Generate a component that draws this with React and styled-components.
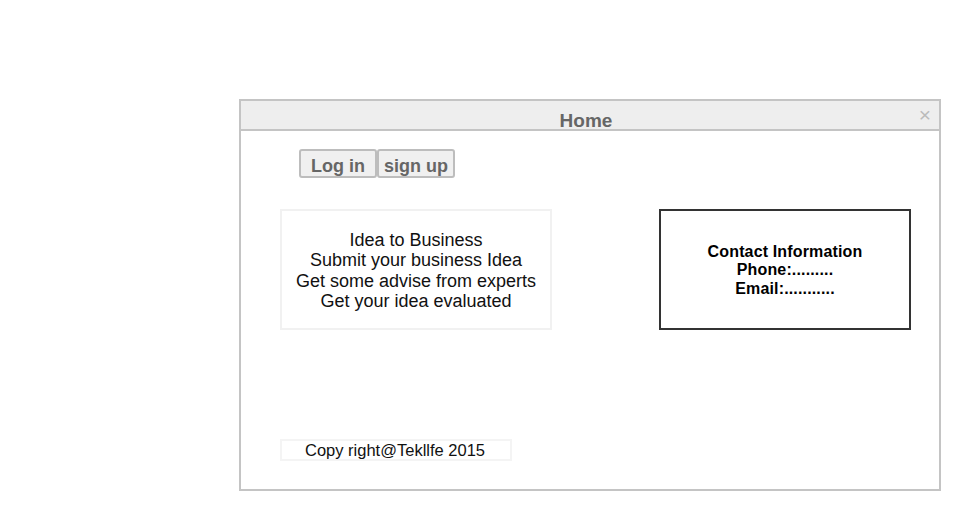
import React from 'react';
import styled, { createGlobalStyle } from 'styled-components';

const GlobalStyle = createGlobalStyle`
  html, body {
    margin: 0;
    padding: 0;
    background: #ffffff;
    font-family: "Liberation Sans", Arial, sans-serif;
  }
`;

const Page = styled.div`
  padding: 99px 0 0 239px;
`;

const Window = styled.div`
  box-sizing: border-box;
  width: 702px;
  height: 392px;
  border: 2px solid #c4c4c4;
  display: flex;
  flex-direction: column;
`;

const TitleBar = styled.div`
  position: relative;
  height: 28px;
  background: #eeeeee;
  border-bottom: 2px solid #c4c4c4;
  display: flex;
  justify-content: center;
  align-items: flex-end;
`;

const Title = styled.h1`
  margin: 0 0 -3px -8px;
  font-size: 19px;
  line-height: 22px;
  font-weight: 700;
  color: #666666;
`;

const Close = styled.span`
  position: absolute;
  right: 8px;
  top: 3px;
  font-size: 21px;
  line-height: 21px;
  color: #bbbbbb;
`;

const Body = styled.div`
  flex: 1;
  display: flex;
  flex-direction: column;
  padding: 18px 28px 0 39px;
`;

const ButtonRow = styled.div`
  display: flex;
  margin-left: 19px;
`;

const Button = styled.button`
  box-sizing: border-box;
  height: 29px;
  padding: 3px ${(p) => p.$pad}px 0;
  border: 2px solid #bdbdbd;
  border-radius: 3px;
  background: #f0f0f0;
  font-family: "Liberation Sans", Arial, sans-serif;
  font-size: 18px;
  font-weight: 700;
  color: #666666;
  line-height: 25px;
  cursor: pointer;
`;

const Panels = styled.div`
  display: flex;
  justify-content: space-between;
  margin-top: 31px;
`;

const IdeaBox = styled.div`
  box-sizing: border-box;
  width: 272px;
  height: 121px;
  border: 2px solid #f1f1f1;
  display: flex;
  flex-direction: column;
  justify-content: center;
  align-items: center;
  text-align: center;
  font-size: 18px;
  line-height: 20.5px;
  color: #111111;
  padding-top: 2px;
`;

const ContactBox = styled.div`
  box-sizing: border-box;
  width: 252px;
  height: 121px;
  border: 2px solid #333333;
  display: flex;
  flex-direction: column;
  justify-content: center;
  align-items: center;
  text-align: center;
  font-size: 16px;
  font-weight: 700;
  letter-spacing: 0.15px;
  line-height: 18.5px;
  color: #000000;
  padding-top: 2px;
`;

const Footer = styled.div`
  box-sizing: border-box;
  margin-top: 109px;
  width: 232px;
  height: 22px;
  border: 2px solid #f4f4f4;
  padding-left: 23px;
  font-size: 16.5px;
  line-height: 18px;
  color: #111111;
`;

export default function App() {
  return (
    <>
      <GlobalStyle />
      <Page>
        <Window>
          <TitleBar>
            <Title>Home</Title>
            <Close>×</Close>
          </TitleBar>
          <Body>
            <ButtonRow>
              <Button $pad={10}>Log in</Button>
              <Button $pad={5}>sign up</Button>
            </ButtonRow>
            <Panels>
              <IdeaBox>
                <div>Idea to Business</div>
                <div>Submit your business Idea</div>
                <div>Get some advise from experts</div>
                <div>Get your idea evaluated</div>
              </IdeaBox>
              <ContactBox>
                <div>Contact Information</div>
                <div>Phone:.........</div>
                <div>Email:...........</div>
              </ContactBox>
            </Panels>
            <Footer>Copy right@Tekllfe 2015</Footer>
          </Body>
        </Window>
      </Page>
    </>
  );
}
